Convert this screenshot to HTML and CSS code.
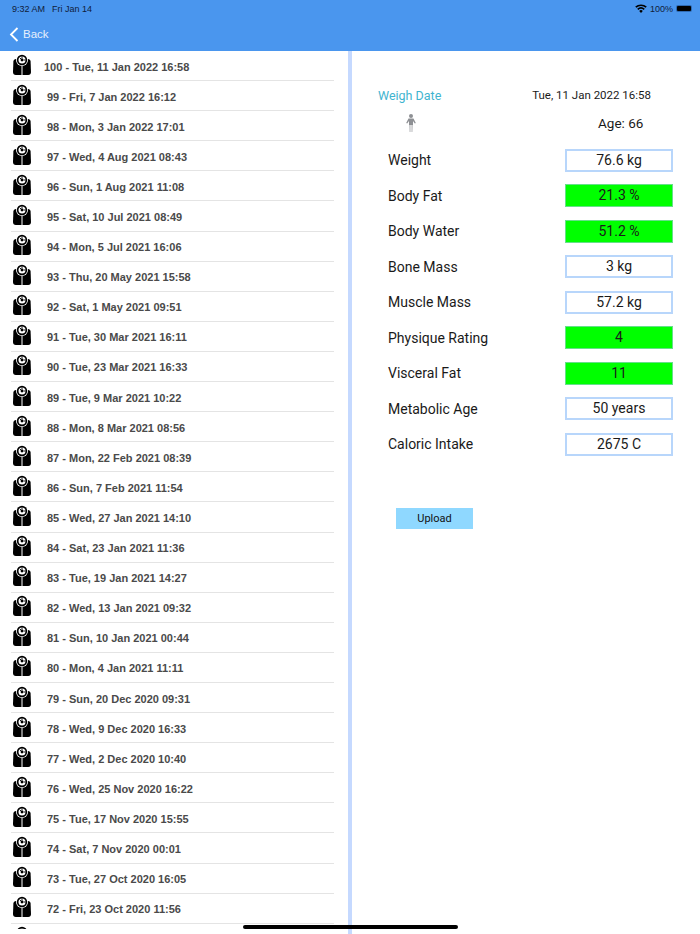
FILE: index.html
```html
<!DOCTYPE html>
<html lang="en">
<head>
    <meta charset="UTF-8">
    <meta name="viewport" content="width=device-width, initial-scale=1.0">
    <title>Weigh History</title>
    <link rel="stylesheet" href="styles.css">
</head>
<body>
    <svg class="defs" width="0" height="0">
        <symbol id="scale" viewBox="0 0 18 21">
            <path d="M3 5h12c1.500 0 2.500 1 2.600 2.500L18 18c0 1.800-1 3-2.800 3H2.800C1 21 0 19.800 0 18L.4 7.500C.5 6 1.500 5 3 5z" fill="#000"/>
            <circle cx="9" cy="6" r="6" fill="#fff"/>
            <circle cx="9" cy="6" r="5.200" fill="#000"/>
            <circle cx="9" cy="6" r="3.500" fill="#fff"/>
            <circle cx="9" cy="6" r="1.400" fill="#000"/>
            <path d="M9 6L6.800 3.800M9 2.500v2M12.500 6h-2" stroke="#000" stroke-width="0.900"/>
            <path d="M8.500 12h1v9h-1z" fill="#fff"/>
        </symbol>
    </svg>

    <div class="statusbar">
        <span class="clock">9:32 AM</span>
        <span class="day">Fri Jan 14</span>
        <span class="status-right">
            <svg class="wifi" width="12" height="9" viewBox="0 0 12 9">
                <path d="M6 9L4.200 6.900a2.700 2.700 0 0 1 3.600 0zM3.300 5.900L2.200 4.700a5.800 5.800 0 0 1 7.600 0L8.700 5.900a4.200 4.200 0 0 0-5.400 0zM1.400 3.800L.2 2.600a8.700 8.700 0 0 1 11.600 0L10.600 3.800a7 7 0 0 0-9.200 0z" fill="#000"/>
            </svg>
            100%
            <span class="battery"><span class="battery-level"></span></span>
        </span>
    </div>
    <div class="navbar">
        <svg class="chevron" width="10" height="15" viewBox="0 0 10 15">
            <path d="M8.500 1L2 7.500L8.500 14" fill="none" stroke="#fff" stroke-width="1.800"/>
        </svg>
        <span>Back</span>
    </div>

    <div class="content">
        <ul class="weigh-list">
            <li class="first"><svg class="icon"><use href="#scale"/></svg><span>100 - Tue, 11 Jan 2022 16:58</span></li>
            <li><svg class="icon"><use href="#scale"/></svg><span>99 - Fri, 7 Jan 2022 16:12</span></li>
            <li><svg class="icon"><use href="#scale"/></svg><span>98 - Mon, 3 Jan 2022 17:01</span></li>
            <li><svg class="icon"><use href="#scale"/></svg><span>97 - Wed, 4 Aug 2021 08:43</span></li>
            <li><svg class="icon"><use href="#scale"/></svg><span>96 - Sun, 1 Aug 2021 11:08</span></li>
            <li><svg class="icon"><use href="#scale"/></svg><span>95 - Sat, 10 Jul 2021 08:49</span></li>
            <li><svg class="icon"><use href="#scale"/></svg><span>94 - Mon, 5 Jul 2021 16:06</span></li>
            <li><svg class="icon"><use href="#scale"/></svg><span>93 - Thu, 20 May 2021 15:58</span></li>
            <li><svg class="icon"><use href="#scale"/></svg><span>92 - Sat, 1 May 2021 09:51</span></li>
            <li><svg class="icon"><use href="#scale"/></svg><span>91 - Tue, 30 Mar 2021 16:11</span></li>
            <li><svg class="icon"><use href="#scale"/></svg><span>90 - Tue, 23 Mar 2021 16:33</span></li>
            <li><svg class="icon"><use href="#scale"/></svg><span>89 - Tue, 9 Mar 2021 10:22</span></li>
            <li><svg class="icon"><use href="#scale"/></svg><span>88 - Mon, 8 Mar 2021 08:56</span></li>
            <li><svg class="icon"><use href="#scale"/></svg><span>87 - Mon, 22 Feb 2021 08:39</span></li>
            <li><svg class="icon"><use href="#scale"/></svg><span>86 - Sun, 7 Feb 2021 11:54</span></li>
            <li><svg class="icon"><use href="#scale"/></svg><span>85 - Wed, 27 Jan 2021 14:10</span></li>
            <li><svg class="icon"><use href="#scale"/></svg><span>84 - Sat, 23 Jan 2021 11:36</span></li>
            <li><svg class="icon"><use href="#scale"/></svg><span>83 - Tue, 19 Jan 2021 14:27</span></li>
            <li><svg class="icon"><use href="#scale"/></svg><span>82 - Wed, 13 Jan 2021 09:32</span></li>
            <li><svg class="icon"><use href="#scale"/></svg><span>81 - Sun, 10 Jan 2021 00:44</span></li>
            <li><svg class="icon"><use href="#scale"/></svg><span>80 - Mon, 4 Jan 2021 11:11</span></li>
            <li><svg class="icon"><use href="#scale"/></svg><span>79 - Sun, 20 Dec 2020 09:31</span></li>
            <li><svg class="icon"><use href="#scale"/></svg><span>78 - Wed, 9 Dec 2020 16:33</span></li>
            <li><svg class="icon"><use href="#scale"/></svg><span>77 - Wed, 2 Dec 2020 10:40</span></li>
            <li><svg class="icon"><use href="#scale"/></svg><span>76 - Wed, 25 Nov 2020 16:22</span></li>
            <li><svg class="icon"><use href="#scale"/></svg><span>75 - Tue, 17 Nov 2020 15:55</span></li>
            <li><svg class="icon"><use href="#scale"/></svg><span>74 - Sat, 7 Nov 2020 00:01</span></li>
            <li><svg class="icon"><use href="#scale"/></svg><span>73 - Tue, 27 Oct 2020 16:05</span></li>
            <li><svg class="icon"><use href="#scale"/></svg><span>72 - Fri, 23 Oct 2020 11:56</span></li>
            <li><svg class="icon"><use href="#scale"/></svg></li>
        </ul>

        <div class="detail">
            <div class="date-row">
                <span class="date-label">Weigh Date</span>
                <span class="date-value">Tue, 11 Jan 2022 16:58</span>
            </div>
            <div class="age-row">
                <svg class="person" width="10" height="18" viewBox="0 0 10 18">
                    <circle cx="5" cy="2" r="2" fill="#8e9094"/>
                    <path d="M2.500 4.500h5l2.300 4.500-1 .5L7 7v4H3V7L1.200 9.500l-1-.5z" fill="#8e9094"/>
                    <path d="M3 11h1.700v7H3.400zM5.300 11H7l-.4 7H5.300z" fill="#c9cacc"/>
                </svg>
                <span class="age">Age: 66</span>
            </div>
            <div class="metric"><span>Weight</span><span class="value">76.6 kg</span></div>
            <div class="metric"><span>Body Fat</span><span class="value good">21.3 %</span></div>
            <div class="metric"><span>Body Water</span><span class="value good">51.2 %</span></div>
            <div class="metric"><span>Bone Mass</span><span class="value">3 kg</span></div>
            <div class="metric"><span>Muscle Mass</span><span class="value">57.2 kg</span></div>
            <div class="metric"><span>Physique Rating</span><span class="value good">4</span></div>
            <div class="metric"><span>Visceral Fat</span><span class="value good">11</span></div>
            <div class="metric"><span>Metabolic Age</span><span class="value">50 years</span></div>
            <div class="metric"><span>Caloric Intake</span><span class="value">2675 C</span></div>
            <button class="upload">Upload</button>
        </div>
    </div>

    <div class="home-bar"></div>
</body>
</html>
```

FILE: styles.css
```css
html, body {
    height: 100%;
}
body {
    font-family: 'Roboto', 'Liberation Sans', sans-serif;
    background-color: #ffffff;
    color: #1a1a1a;
    margin: 0;
    height: 934px;
    overflow: hidden;
    display: flex;
    flex-direction: column;
}
.defs {
    display: block;
    height: 0;
}
.statusbar {
    background-color: #4a96ee;
    height: 17px;
    flex: none;
    display: flex;
    align-items: center;
    padding: 0 8px 0 12px;
    font-family: 'Liberation Sans', sans-serif;
    font-size: 9px;
    color: #10203a;
}
.day {
    margin-left: 7px;
}
.status-right {
    margin-left: auto;
    display: flex;
    align-items: center;
    gap: 3px;
}
.battery {
    width: 16px;
    height: 7px;
    padding: 1px;
    border-radius: 2px;
    background-color: #2f6bb4;
    box-sizing: border-box;
}
.battery-level {
    display: block;
    height: 100%;
    background-color: #000;
    border-radius: 1px;
}
.navbar {
    background-color: #4a96ee;
    height: 34px;
    flex: none;
    display: flex;
    align-items: center;
    padding-left: 9px;
    box-sizing: border-box;
    color: #e6f0fd;
    font-family: 'Liberation Sans', sans-serif;
    font-size: 11.500px;
    gap: 4px;
}
.content {
    flex: 1;
    display: flex;
    min-height: 0;
}
.weigh-list {
    list-style: none;
    margin: 0;
    padding: 0 14px 0 11px;
    box-sizing: border-box;
    overflow: hidden;
    flex: none;
    width: 348px;
    height: 878px;
}
.weigh-list li {
    height: 30.100px;
    box-sizing: border-box;
    border-bottom: 1px solid #e4e4e4;
    display: flex;
    align-items: center;
    font-family: 'Liberation Sans', sans-serif;
    font-size: 11px;
    font-weight: bold;
    color: #4a4a4a;
}
.weigh-list li span {
    margin-left: 15px;
    margin-top: 2px;
}
.weigh-list li.first span {
    margin-left: 12px;
}
.icon {
    width: 18px;
    height: 21px;
    margin: -3px 1px 0 2px;
    flex: none;
}
.detail {
    flex: 1;
    border-left: 4px solid #c5d9ff;
    padding: 36px 27px 0 26px;
}
.date-row {
    display: flex;
    justify-content: space-between;
    align-items: center;
    font-size: 11.500px;
    height: 16px;
    padding-right: 22px;
}
.date-label {
    color: #3fb4cf;
    font-size: 12.500px;
}
.age-row {
    display: flex;
    align-items: center;
    height: 39px;
    margin-bottom: 6.500px;
}
.person {
    margin-left: 28px;
}
.age {
    margin-left: 182px;
    font-size: 13.500px;
}
.metric {
    display: flex;
    justify-content: space-between;
    align-items: center;
    height: 23px;
    margin-bottom: 12.500px;
    margin-left: 10px;
    font-size: 14px;
}
.value {
    width: 108px;
    height: 23px;
    box-sizing: border-box;
    border: 2px solid #b8d6fb;
    text-align: center;
    line-height: 19px;
    font-size: 14px;
}
.good {
    background-color: #00ff00;
    border: 1px solid #66e08a;
    line-height: 21px;
}
.upload {
    display: block;
    width: 77px;
    height: 21px;
    margin: 52px 0 0 18px;
    padding: 0;
    border: none;
    background-color: #8fd8ff;
    font-family: inherit;
    font-size: 11px;
    color: #111;
}
.home-bar {
    position: absolute;
    left: 243px;
    top: 925px;
    width: 215px;
    height: 4px;
    background-color: #000;
    border-radius: 2px;
}
```
